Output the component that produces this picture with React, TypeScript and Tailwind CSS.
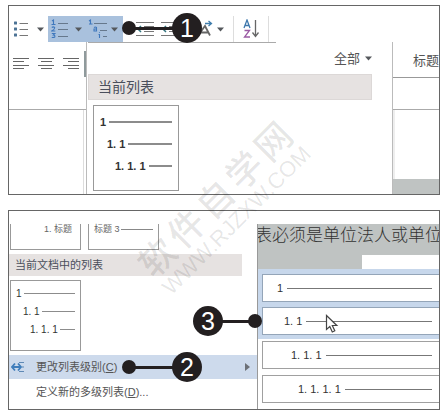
import React from 'react';
import clsx from 'clsx';

interface PreviewRow {
  label: string;
  large: string;
  small: string;
}

const previewRows: PreviewRow[] = [
  { label: '1', large: 'pl-[6px]', small: 'pl-[5px]' },
  { label: '1. 1', large: 'pl-[13px]', small: 'pl-[12px]' },
  { label: '1. 1. 1', large: 'pl-[21px]', small: 'pl-[19px]' },
];

const levels = [
  { label: '1', indent: 'pl-[14px]' },
  { label: '1. 1', indent: 'pl-[21px]' },
  { label: '1. 1. 1', indent: 'pl-[28px]' },
  { label: '1. 1. 1. 1', indent: 'pl-[35px]' },
];

function Caret() {
  return (
    <svg width="7" height="5" viewBox="0 0 7 5" className="shrink-0">
      <path d="M0 0.5h7L3.5 4.5z" fill="#55585c" />
    </svg>
  );
}

function BulletIcon() {
  return (
    <svg width="16" height="18" viewBox="0 0 16 18">
      {[3, 9, 15].map((y) => (
        <g key={y}>
          <rect x="1" y={y - 1.5} width="3" height="3" rx="0.5" fill="#4d7395" />
          <path d={`M6.5 ${y + 0.5}H15`} stroke="#777" />
        </g>
      ))}
    </svg>
  );
}

function NumberIcon() {
  return (
    <svg width="18" height="20" viewBox="0 0 18 20">
      <g fill="none" stroke="#3f78bd" strokeWidth="1.1">
        <path d="M1 2l1.500-1v4.500M0.500 5.500h4" />
        <path d="M0.800 8.500q1.500-1.300 2.800 0q.5 1.400-2.800 3.500h3.500" />
        <path d="M0.800 14.500h3l-1.500 1.500q2 .2 1.500 2q-1.500 1-3 .2" />
      </g>
      <path d="M7 4.500h10M7 10.500h10M7 17.500h10" stroke="#66788c" />
    </svg>
  );
}

function MultilevelIcon() {
  return (
    <svg width="20" height="20" viewBox="0 0 20 20">
      <g fill="none" stroke="#3f78bd" strokeWidth="1.1">
        <path d="M1 2l1.500-1v4M1 5h3.500" />
        <path d="M6 8.500q1.500-1 2.500 0v3.500h-2.500v-2h2.500" />
        <path d="M11.500 15v4M10.500 15.500h1M11.500 13v.8" />
      </g>
      <path d="M6 4.500h13M12 11.500h7M15 17.500h4" stroke="#66788c" />
    </svg>
  );
}

function IndentIcon() {
  return (
    <svg width="20" height="18" viewBox="0 0 20 18">
      <path d="M1 2.500h18M9 6.500h10M9 11.500h10M1 15.500h18" stroke="#777" />
      <path d="M6 6L3 9l3 3" fill="none" stroke="#35757f" strokeWidth="1.500" />
    </svg>
  );
}

function TextEffectIcon() {
  return (
    <svg width="18" height="18" viewBox="0 0 18 18" fill="none">
      <path d="M1 15.500L8 6l5 9.500M4 12.500h7" stroke="#666" strokeWidth="1.800" />
      <path d="M8 3.500h6M11.500 1l3 2.500-3 2.500" stroke="#3f7dac" strokeWidth="1.300" />
    </svg>
  );
}

function SortIcon() {
  return (
    <svg width="17" height="20" viewBox="0 0 17 20" fill="none">
      <path d="M1 9L4 1l3 8M2 6.500h4" stroke="#3f78ad" strokeWidth="1.300" />
      <path d="M1.500 11.500h5l-5 6.500h5.500" stroke="#9a5aa3" strokeWidth="1.300" />
      <path d="M12.500 1v16M9.500 13.500l3 4 3-4" stroke="#666" strokeWidth="1.300" />
    </svg>
  );
}

function AlignIcon({ kind }: { kind: 'left' | 'center' | 'right' }) {
  const shift = { left: 0, center: 3, right: 5 }[kind];
  return (
    <svg width="16" height="12" viewBox="0 0 16 12">
      <path
        d={`M0 .5h16M${shift} 3.500h11M0 7.500h16M${shift} 10.500h11`}
        stroke="#666"
      />
    </svg>
  );
}

function LevelIcon() {
  return (
    <svg width="14" height="10" viewBox="0 0 14 10" fill="none">
      <path d="M4 1.500L1 5l3 3.500M7 1.500L10 5 7 8.500M1 5h9" stroke="#3f7dbb" strokeWidth="1.800" />
      <path d="M8 .5h5M11 5h2M8 9.500h5" stroke="#5f89b5" />
    </svg>
  );
}

function ListPreview({ size }: { size: 'large' | 'small' }) {
  const large = size === 'large';
  return (
    <button
      aria-label="1 / 1.1 / 1.1.1"
      className={clsx(
        'flex flex-col border border-[#999] bg-white text-[#333]',
        large
          ? 'h-[86px] w-[86px] pt-[5px] pr-[6px] text-[11px] font-bold'
          : 'h-[71px] w-[71px] pt-[3px] pr-[5px] text-[10px]'
      )}
    >
      {previewRows.map((row) => (
        <span
          key={row.label}
          className={clsx(
            'flex w-full items-center font-[Liberation_Sans]',
            large ? 'h-[22px] gap-[3px]' : 'h-[18px] gap-[2px]',
            large ? row.large : row.small
          )}
        >
          <span className="whitespace-nowrap">{row.label}</span>
          <span className={clsx('flex-1 bg-[#8c8c8c]', large ? 'h-[2px]' : 'h-px')} />
        </span>
      ))}
    </button>
  );
}

function LevelButton({ label, indent, active }: { label: string; indent: string; active?: boolean }) {
  return (
    <button
      className={clsx(
        'relative flex h-[28px] w-full items-center gap-1 border-y border-l bg-white pr-[7px] font-[Liberation_Sans] text-[11px] text-[#333]',
        active ? 'border-[#94a5b8]' : 'border-[#a0a0a0]',
        indent
      )}
    >
      <span className="whitespace-nowrap">{label}</span>
      <span className="h-px flex-1 bg-[#777]" />
    </button>
  );
}

function Callout({ number, reverse, className }: { number: number; reverse?: boolean; className: string }) {
  return (
    <div className={clsx('absolute flex items-center', reverse && 'flex-row-reverse', className)}>
      <span className="size-[14px] rounded-full bg-[#231f20]" />
      <span className="-mx-px h-[3px] flex-1 bg-[#231f20]" />
      <span className="flex size-[30px] items-center justify-center rounded-full bg-[#231f20] font-[Liberation_Sans] text-[25px] leading-none text-white">
        {number}
      </span>
    </div>
  );
}

function ParagraphPanel() {
  return (
    <section className="relative overflow-hidden border border-[#666] bg-white">
      {/* Toolbar */}
      <div className="flex h-[36px] pt-[10px]">
        <button aria-label="项目符号" className="flex w-[39px] items-center gap-2 pl-1">
          <BulletIcon />
          <Caret />
        </button>
        <button aria-label="编号" className="flex w-[38px] items-center gap-[6px] bg-[#a9c1dd] pl-[3px]">
          <NumberIcon />
          <Caret />
        </button>
        <button aria-label="多级列表" className="flex w-[37px] items-center gap-[3px] bg-[#a9c1dd] pl-[2px]">
          <MultilevelIcon />
          <Caret />
        </button>
        <button aria-label="减少缩进量" className="ml-3 flex items-center">
          <IndentIcon />
        </button>
        <button aria-label="增加缩进量" className="ml-[5px] flex items-center">
          <IndentIcon />
        </button>
        <button aria-label="中文版式" className="ml-[17px] flex items-center gap-[2px]">
          <TextEffectIcon />
          <Caret />
        </button>
        <button aria-label="排序" className="ml-[9px] flex w-[36px] items-center justify-center border-x border-[#ddd]">
          <SortIcon />
        </button>
      </div>

      <div className="flex">
        <div className="flex w-[77px] shrink-0 flex-col">
          <div className="flex h-[68px] justify-between border-b border-[#aaa] pl-1">
            <div className="flex gap-[9px] pt-4">
              <AlignIcon kind="left" />
              <AlignIcon kind="center" />
              <AlignIcon kind="right" />
            </div>
            <span className="mt-[9px] h-[26px] w-[2px] bg-[#8f9a9c]" />
          </div>
          <div className="w-[75px] flex-1 border-r border-[#ddd]" />
        </div>

        {/* List library */}
        <div className="min-w-0 flex-1 border-x border-[#bbb] pl-px pb-[3px]">
          <div className="h-px w-[188px] bg-[#aaa]" />
          <div className="flex h-[31px] items-center justify-end pr-[20px]">
            <button className="flex items-center gap-[5px] text-[13px] leading-none text-[#555]">
              全部
              <Caret />
            </button>
          </div>
          <h2 className="mr-[20px] flex h-[26px] items-center border border-[#dcd8d7] bg-[#e6e2e1] pl-[9px] text-[14px] font-normal text-[#4a4f5c]">
            当前列表
          </h2>
          <div className="pt-[5px] pl-[5px]">
            <ListPreview size="large" />
          </div>
        </div>

        <div className="flex w-[46px] shrink-0 flex-col">
          <div className="h-[36px] overflow-hidden border-b border-[#999] pt-[10px] pl-[20px] text-[13px] leading-[18px] whitespace-nowrap text-[#555]">
            标题
          </div>
          <div className="h-[32px] border-b border-[#aaa]" />
          <div className="flex-1 border-l-2 border-[#eee]" />
          <div className="h-[15px] bg-[#bfc3c2]" />
        </div>
      </div>

      <Callout number={1} className="top-[7px] left-[113px] w-[80px]" />
    </section>
  );
}

function LevelPanel() {
  return (
    <section className="relative flex overflow-hidden border border-[#666] bg-white pt-[13px]">
      <div className="w-[249px] shrink-0 border-r border-[#999] text-[#555]">
        <div className="flex h-[26px] gap-[7px] pl-px text-[9px] leading-none text-[#666]">
          <button className="flex w-[71px] justify-end border-x border-b border-[#999] pt-px pr-[8px]">1. 标题</button>
          <button className="flex w-[71px] gap-[1px] border-x border-b border-[#999] pt-px pr-[5px] pl-[5px]">
            <span className="whitespace-nowrap">标题 3</span>
            <span className="mt-1 h-px flex-1 bg-[#888]" />
          </button>
        </div>
        <h2 className="mt-1 mr-[15px] flex h-[22px] items-center bg-[#e6e2e1] pl-[6px] text-[11px] font-normal text-[#4a4f5c]">
          当前文档中的列表
        </h2>
        <div className="pt-1 pl-px">
          <ListPreview size="small" />
        </div>
        <button className="mt-1 flex h-[24px] w-full items-center bg-[#cddaec] pr-[7px] pl-[2px] text-[11px]">
          <LevelIcon />
          <span className="ml-[11px] flex-1 text-left">
            更改列表级别(<u>C</u>)
          </span>
          <svg width="5" height="8" viewBox="0 0 5 8">
            <path d="M0 0l5 4-5 4z" fill="#6c7077" />
          </svg>
        </button>
        <button className="mb-1 flex h-[26px] w-full items-center pl-[27px] text-[11px]">
          定义新的多级列表(<u>D</u>)...
        </button>
      </div>

      <div className="min-w-0 flex-1 overflow-hidden">
        <div className="flex h-[31px] justify-center overflow-hidden bg-[#bfc3c2] text-[17px] leading-[24px] font-light whitespace-nowrap text-[#333]">
          表必须是单位法人或单位
        </div>
        <div className="h-[14px] w-[104px] bg-[#bfc3c2]" />
        <div className="relative flex flex-col gap-[5px] bg-[#c7d7eb] pt-[5px] pb-1 pl-1">
          <LevelButton {...levels[0]} active />
          <LevelButton {...levels[1]} active />
          <svg width="14" height="20" viewBox="0 0 14 20" className="absolute top-[45px] left-[67px]">
            <path
              d="M1.500 1.500v14l3.300-3 2.500 5.500 2.500-1.200-2.500-5.300h4.500z"
              fill="#fff"
              stroke="#444"
              strokeWidth="1.200"
            />
          </svg>
        </div>
        <div className="flex flex-col gap-[6px] pt-[2px] pb-[6px] pl-1">
          <LevelButton {...levels[2]} />
          <LevelButton {...levels[3]} />
        </div>
      </div>

      <Callout number={2} className="top-[141px] left-[113px] w-[80px]" />
      <Callout number={3} reverse className="top-[95px] left-[184px] w-[69px]" />
    </section>
  );
}

export default function App() {
  return (
    <main className="relative flex flex-col gap-[15px] overflow-hidden bg-white pt-[5px] pr-[7px] pb-[5px] pl-2 font-['Liberation_Sans','Noto_Sans_CJK_SC',sans-serif]">
      <ParagraphPanel />
      <LevelPanel />

      {/* Watermark */}
      <div className="pointer-events-none absolute top-1/2 left-1/2 flex -translate-x-1/2 -translate-y-1/2 -rotate-45 flex-col items-center whitespace-nowrap text-black/10">
        <div className="flex gap-[5px] text-[36px] leading-[36px] font-medium">
          {['软', '件', '自', '学', '网'].map((char) => (
            <span key={char}>{char}</span>
          ))}
        </div>
        <div className="text-[22px] leading-[22px]">WWW.RJZXW.COM</div>
      </div>
    </main>
  );
}
